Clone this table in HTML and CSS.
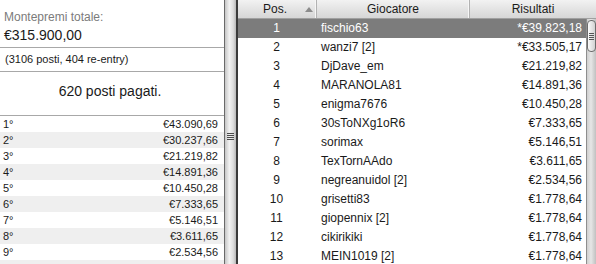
FILE: index.html
```html
<!DOCTYPE html>
<html lang="it">
<head>
<meta charset="utf-8">
<title>Montepremi</title>
<link rel="stylesheet" href="styles.css">
</head>
<body>
<div class="app">
  <section class="prize">
    <div class="summary">
      <div class="label">Montepremi totale:</div>
      <div class="total">€315.900,00</div>
    </div>
    <div class="entries">(3106 posti, 404 re-entry)</div>
    <div class="paid">620 posti pagati.</div>
    <ul class="payouts">
      <li><span>1°</span><span>€43.090,69</span></li>
      <li><span>2°</span><span>€30.237,66</span></li>
      <li><span>3°</span><span>€21.219,82</span></li>
      <li><span>4°</span><span>€14.891,36</span></li>
      <li><span>5°</span><span>€10.450,28</span></li>
      <li><span>6°</span><span>€7.333,65</span></li>
      <li><span>7°</span><span>€5.146,51</span></li>
      <li><span>8°</span><span>€3.611,65</span></li>
      <li><span>9°</span><span>€2.534,56</span></li>
      <li><span>10° - 18°</span><span>€1.778,64</span></li>
    </ul>
  </section>
  <div class="splitter"><span class="grip"></span></div>
  <section class="results">
    <div class="thead">
      <div class="th th-pos">Pos.<span class="sort"></span></div>
      <div class="th th-name">Giocatore</div>
      <div class="th th-res">Risultati</div>
    </div>
    <div class="tbody">
      <div class="rows">
        <div class="row sel"><span class="pos">1</span><span class="name">fischio63</span><span class="amt">*€39.823,18</span></div>
        <div class="row"><span class="pos">2</span><span class="name">wanzi7 [2]</span><span class="amt">*€33.505,17</span></div>
        <div class="row"><span class="pos">3</span><span class="name">DjDave_em</span><span class="amt">€21.219,82</span></div>
        <div class="row"><span class="pos">4</span><span class="name">MARANOLA81</span><span class="amt">€14.891,36</span></div>
        <div class="row"><span class="pos">5</span><span class="name">enigma7676</span><span class="amt">€10.450,28</span></div>
        <div class="row"><span class="pos">6</span><span class="name">30sToNXg1oR6</span><span class="amt">€7.333,65</span></div>
        <div class="row"><span class="pos">7</span><span class="name">sorimax</span><span class="amt">€5.146,51</span></div>
        <div class="row"><span class="pos">8</span><span class="name">TexTornAAdo</span><span class="amt">€3.611,65</span></div>
        <div class="row"><span class="pos">9</span><span class="name">negreanuidol [2]</span><span class="amt">€2.534,56</span></div>
        <div class="row"><span class="pos">10</span><span class="name">grisetti83</span><span class="amt">€1.778,64</span></div>
        <div class="row"><span class="pos">11</span><span class="name">giopennix [2]</span><span class="amt">€1.778,64</span></div>
        <div class="row"><span class="pos">12</span><span class="name">cikirikiki</span><span class="amt">€1.778,64</span></div>
        <div class="row"><span class="pos">13</span><span class="name">MEIN1019 [2]</span><span class="amt">€1.778,64</span></div>
      </div>
      <div class="scrollbar"><div class="thumb"></div></div>
    </div>
  </section>
</div>
</body>
</html>
```
FILE: styles.css
```css
* { box-sizing: border-box; margin: 0; padding: 0; }
html, body { width: 596px; height: 264px; overflow: hidden; }
body {
  font-family: "Liberation Sans", Arial, sans-serif;
  color: #1a1a1a;
  background: #fff;
}
.app { display: flex; height: 264px; }

.prize {
  width: 224px;
  flex: none;
  display: flex;
  flex-direction: column;
  background: #fff;
  overflow: hidden;
}
.prize > * { flex: none; }
.summary {
  height: 48px;
  padding: 9px 0 0 4px;
  border-bottom: 1px solid #a8a8a8;
}
.label { font-size: 12px; line-height: 16px; color: #7b7b7b; }
.total { font-size: 14px; line-height: 20px; color: #1a1a1a; }
.entries {
  height: 24px;
  line-height: 23px;
  font-size: 11px;
  padding-left: 5px;
  border-bottom: 1px solid #a8a8a8;
}
.paid {
  height: 44px;
  padding: 11px 4px 0 0;
  font-size: 14px;
  line-height: 17px;
  text-align: center;
  border-bottom: 1px solid #a8a8a8;
}
.payouts { list-style: none; }
.payouts li {
  display: flex;
  justify-content: space-between;
  height: 16px;
  line-height: 16px;
  font-size: 11px;
  padding: 0 6px 0 3px;
}
.payouts li:nth-child(even) { background: #efefef; }

.splitter {
  width: 14px;
  flex: none;
  border-left: 1px solid #6a6a6a;
  border-right: 2px solid #3a3a3a;
  background: linear-gradient(to right, #c6c6c6, #f2f2f2 40%, #dcdcdc 75%, #b8b8b8);
  display: flex;
  flex-direction: column;
  align-items: center;
  padding-top: 133px;
}
.grip {
  width: 7px;
  height: 7px;
  background: repeating-linear-gradient(to bottom, #4a4a4a 0 1px, transparent 1px 2px);
}

.results {
  flex: 1;
  display: flex;
  flex-direction: column;
  min-width: 0;
}
.thead {
  display: grid;
  grid-template-columns: 79px 153px 1fr;
  height: 19px;
  flex: none;
  border-bottom: 1px solid #a0a0a0;
  background: linear-gradient(#f2f2f2, #d6d6d6);
  font-size: 12px;
  line-height: 18px;
  color: #1a1a1a;
}
.th { border-right: 1px solid #b2b2b2; box-shadow: inset -1px 0 #f6f6f6; }
.th:last-child { border-right: 0; box-shadow: none; }
.th-pos { display: flex; align-items: center; padding-left: 25px; }
.sort {
  width: 0;
  height: 0;
  border-left: 4.5px solid transparent;
  border-right: 4.5px solid transparent;
  border-bottom: 5px solid #8c8c8c;
  margin-left: 18px;
}
.th-name, .th-res { text-align: center; }

.tbody { flex: 1; display: flex; min-height: 0; }
.rows { flex: 1; min-width: 0; }
.row {
  display: grid;
  grid-template-columns: 79px 153px 1fr;
  height: 19px;
  line-height: 19px;
  font-size: 12px;
  color: #1a1a1a;
  white-space: nowrap;
}
.row .pos { text-align: center; padding-right: 2px; }
.row .name { padding-left: 4px; }
.row .amt { text-align: right; padding-right: 4px; }
.row.sel { background: #7c7c7c; color: #fff; }

.scrollbar {
  width: 10px;
  flex: none;
  padding-top: 1px;
  background: linear-gradient(to right, #8e8e8e 0 1px, #cfcfcf 1px, #e6e6e6 50%, #c0c0c0);
}
.thumb {
  height: 32px;
  margin-left: 1px;
  border: 1px solid #6c6c6c;
  border-radius: 4px;
  background: linear-gradient(to right, #fafafa, #d2d2d2);
  display: flex;
  align-items: center;
  justify-content: center;
}
.thumb::before {
  content: "";
  width: 5px;
  height: 7px;
  background: repeating-linear-gradient(to bottom, #555 0 1px, transparent 1px 2px);
}
```
